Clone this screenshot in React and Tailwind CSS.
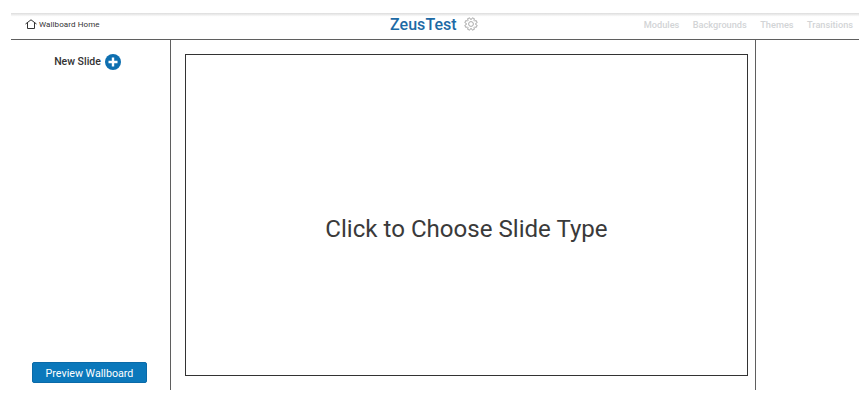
const tabs = ["Modules", "Backgrounds", "Themes", "Transitions"];

// outline gear with eight teeth
const gearPath = Array.from({ length: 8 }, (_, i) => {
  const a = (i * Math.PI) / 4 + Math.PI / 8;
  const pt = (r, d) => {
    const t = a + d;
    return `${(7 + r * Math.cos(t)).toFixed(2)} ${(7 + r * Math.sin(t)).toFixed(2)}`;
  };
  return `${i === 0 ? "M" : "L"}${pt(4.7, -0.28)}L${pt(6.3, -0.18)}L${pt(6.3, 0.18)}L${pt(4.7, 0.28)}`;
}).join("") + "Z";

export default function App() {
  return (
    <div className="h-[403px] w-[861px] overflow-hidden bg-white pt-[13px] pl-[11px] pr-[2px] font-['Roboto',sans-serif]">
      <header className="relative flex h-[27px] items-center justify-between border-b border-[#5f5f5f] bg-gradient-to-b from-[#dcdcdc] from-0% to-white to-[14%]">
        <a className="flex items-center pl-[14px] text-[8px] tracking-[0.1px] text-[#333]">
          <svg width="12" height="10" viewBox="0 0 12 10" fill="none" stroke="#333" strokeWidth="1" className="mr-[2px] mt-[-4px]">
            <path d="M0.5 5 6 0.8 11.5 5M2.5 4v5.5h7V4" />
          </svg>
          <span className="mt-[-3px]">Wallboard Home</span>
        </a>
        <div className="absolute left-[379px] top-[2px] flex items-center">
          <span className="text-[16px] leading-[20px] font-medium tracking-[0.05px] text-[#1c6aa5]">ZeusTest</span>
          <svg width="14" height="14" viewBox="0 0 14 14" fill="none" stroke="#a0a0a0" strokeWidth="0.9" className="ml-[7.5px] mt-[-3px]">
            <path d={gearPath} />
            <circle cx="7" cy="7" r="2.4" />
          </svg>
        </div>
        <nav className="flex gap-[13.5px] pr-[6px] pb-[2px] text-[9.2px] font-medium text-[#d2d4d6]">
          {tabs.map((tab) => <span key={tab}>{tab}</span>)}
        </nav>
      </header>
      <div className="flex h-[350px]">
        <aside className="flex w-[160px] flex-col items-center justify-between border-r border-[#5f5f5f] pt-[14px] pb-[7px]">
          <div className="ml-[-6px] flex items-center gap-[4px] text-[10.5px] font-medium text-[#333]">
            New Slide
            <svg width="16" height="16" viewBox="0 0 16 16">
              <circle cx="8" cy="8" r="8" fill="#0e6fb0" />
              <path d="M8 3.5v9M3.5 8h9" stroke="#fff" strokeWidth="2.4" />
            </svg>
          </div>
          <button className="ml-[-2px] h-[21px] w-[115px] rounded-[2px] border border-[#0a6aa8] bg-[#0b78bb] pt-[3px] text-[10.7px] font-normal text-white">Preview Wallboard</button>
        </aside>
        <main className="w-[585px] border-r border-[#5f5f5f] pt-[14px] pl-[14px]">
          <div className="flex h-[322px] w-[563px] items-center justify-center border border-[#333] pt-[28px] text-[24.1px] text-[#3a3a3a]">
            Click to Choose Slide Type
          </div>
        </main>
      </div>
    </div>
  );
}
